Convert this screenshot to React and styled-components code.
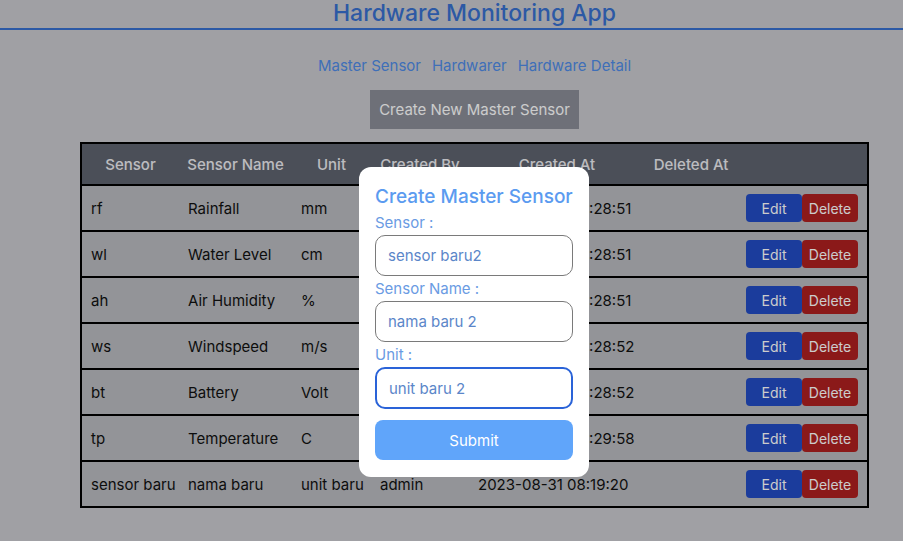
import React from 'react';
import styled, { createGlobalStyle } from 'styled-components';

const GlobalStyle = createGlobalStyle`
  body {
    margin: 0;
    background: #c8c9cd;
    font-family: Inter, "Noto Sans", sans-serif;
  }
`;

const Header = styled.header`
  border-bottom: 2px solid #3870cf;
  padding: 0 0 1px 46px;
  text-align: center;
`;

const Title = styled.h1`
  margin: 0;
  font-size: 23px;
  line-height: 27px;
  font-weight: 500;
  color: #3870cf;
`;

const Main = styled.main`
  padding-left: 46px;
  display: flex;
  flex-direction: column;
  align-items: center;
`;

const Nav = styled.nav`
  margin-top: 27px;
  display: flex;
  gap: 11px;
  line-height: 18px;
`;

const NavLink = styled.a`
  font-size: 15px;
  color: #4f8be6;
  text-decoration: none;
`;

const CreateButton = styled.button`
  margin-top: 15px;
  height: 39px;
  width: 209px;
  border: none;
  background: #8a8d97;
  color: #ffffff;
  font-family: inherit;
  font-size: 15px;
`;

const Table = styled.table`
  margin-top: 13px;
  width: 789px;
  table-layout: fixed;
  border: 2px solid #000;
  border-spacing: 0;
  font-size: 15px;
`;

const Th = styled.th`
  height: 40px;
  padding: 0;
  background: #5e636e;
  color: #ececf0;
  font-weight: 500;
  text-align: center;
  border-bottom: 2px solid #000;
`;

const Row = styled.tr`
  background: #b8babe;
  &:not(:last-child) td {
    border-bottom: 2px solid #000;
  }
`;

const Td = styled.td`
  height: 44px;
  padding: 0 0 0 9px;
  color: #111;
  white-space: nowrap;
  overflow: hidden;
`;

const ActionCell = styled(Td)`
  padding: 0 9px 0 0;
  text-align: right;
  font-size: 0;
`;

const ActionButton = styled.button`
  width: 56px;
  height: 28px;
  border: none;
  border-radius: 4px;
  background: ${(p) => (p.$danger ? '#ae2020' : '#224bc3')};
  color: #ffffff;
  font-family: inherit;
  font-size: 14px;
  vertical-align: middle;
`;

const Backdrop = styled.div`
  position: fixed;
  inset: 0;
  background: rgba(0, 0, 0, 0.2);
`;

const Modal = styled.form`
  position: absolute;
  left: 359px;
  top: 167px;
  width: 198px;
  padding: 16px 16px 17px;
  background: #fff;
  border-radius: 12px;
  display: flex;
  flex-direction: column;
`;

const ModalTitle = styled.h2`
  margin: 0;
  font-size: 19px;
  line-height: 27px;
  font-weight: 500;
  color: #5b9bf0;
`;

const Label = styled.label`
  margin-top: 2px;
  font-size: 15px;
  line-height: 22px;
  color: #6a9be3;
`;

const Input = styled.input`
  box-sizing: border-box;
  margin-top: 1px;
  height: ${(p) => (p.$focused ? '42px' : '41px')};
  width: 198px;
  padding: 0 12px;
  border: ${(p) => (p.$focused ? '2px solid #2a63d8' : '1px solid #7a7a7a')};
  border-radius: 10px;
  font-family: inherit;
  font-size: 15px;
  color: #5b86c9;
  outline: none;
`;

const Submit = styled.button`
  margin-top: 11px;
  height: 40px;
  border: none;
  border-radius: 8px;
  background: #60a5fa;
  color: #fff;
  font-family: inherit;
  font-size: 15px;
`;

const columns = [97, 113, 79, 98, 176, 92, 130];
const headers = ['Sensor', 'Sensor Name', 'Unit', 'Created By', 'Created At', 'Deleted At', ''];

const sensors = [
  ['rf', 'Rainfall', 'mm', 'admin', '2023-08-30 03:28:51'],
  ['wl', 'Water Level', 'cm', 'admin', '2023-08-30 03:28:51'],
  ['ah', 'Air Humidity', '%', 'admin', '2023-08-30 03:28:51'],
  ['ws', 'Windspeed', 'm/s', 'admin', '2023-08-30 03:28:52'],
  ['bt', 'Battery', 'Volt', 'admin', '2023-08-30 03:28:52'],
  ['tp', 'Temperature', 'C', 'admin', '2023-08-30 03:29:58'],
  ['sensor baru', 'nama baru', 'unit baru', 'admin', '2023-08-31 08:19:20'],
];

export default function App() {
  return (
    <>
      <GlobalStyle />
      <Header>
        <Title>Hardware Monitoring App</Title>
      </Header>
      <Main>
        <Nav>
          <NavLink href="#">Master Sensor</NavLink>
          <NavLink href="#">Hardwarer</NavLink>
          <NavLink href="#">Hardware Detail</NavLink>
        </Nav>
        <CreateButton>Create New Master Sensor</CreateButton>
        <Table>
          <colgroup>
            {columns.map((w, i) => (
              <col key={i} style={{ width: w }} />
            ))}
          </colgroup>
          <thead>
            <tr>
              {headers.map((h, i) => (
                <Th key={i}>{h}</Th>
              ))}
            </tr>
          </thead>
          <tbody>
            {sensors.map((s) => (
              <Row key={s[0]}>
                {s.map((v, i) => (
                  <Td key={i}>{v}</Td>
                ))}
                <Td />
                <ActionCell>
                  <ActionButton>Edit</ActionButton>
                  <ActionButton $danger>Delete</ActionButton>
                </ActionCell>
              </Row>
            ))}
          </tbody>
        </Table>
      </Main>
      <Backdrop>
        <Modal onSubmit={(e) => e.preventDefault()}>
          <ModalTitle>Create Master Sensor</ModalTitle>
          <Label>Sensor :</Label>
          <Input defaultValue="sensor baru2" />
          <Label>Sensor Name :</Label>
          <Input defaultValue="nama baru 2" />
          <Label>Unit :</Label>
          <Input $focused defaultValue="unit baru 2" />
          <Submit type="submit">Submit</Submit>
        </Modal>
      </Backdrop>
    </>
  );
}
